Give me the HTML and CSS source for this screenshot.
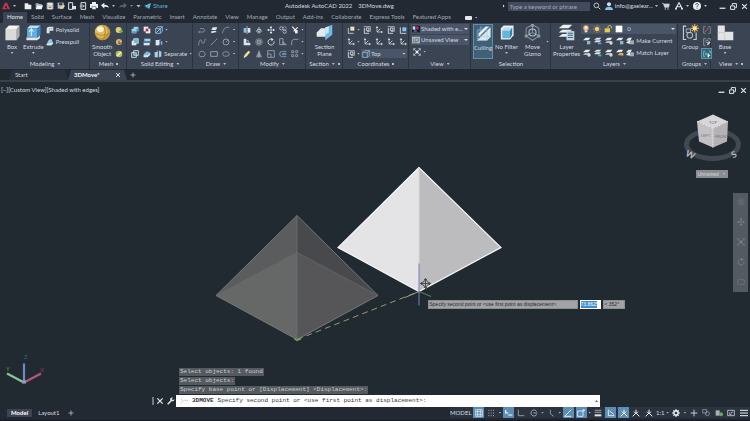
FILE: index.html
```html
<!DOCTYPE html>
<html lang="en">
  <head>
    <meta charset="UTF-8" />
    <meta name="viewport" content="width=device-width, initial-scale=1.0" />
    <title>Autodesk AutoCAD 2022 - 3DMove.dwg</title>
    <link rel="stylesheet" href="styles.css">
  </head>
  <body>
    <!-- icon sprite -->
    <svg class="sprite" aria-hidden="true">
      <symbol id="logo" viewBox="0 0 12 12"><path d="M0 11 4.500 1h3L12 11H8.500L6 5 4 9h3v2z" fill="#c8324a" /></symbol>
      <symbol id="new" viewBox="0 0 12 12"><path d="M1 2h5l1 2h4v7H1z" fill="#e8ecf0" /></symbol>
      <symbol id="open" viewBox="0 0 12 12"><path d="M1 2h4l1 1h4v2H3l-2 5z" fill="#aab4c0" /><path d="M3 5h9l-2 6H1z" fill="#f0f3f5" /></symbol>
      <symbol id="save" viewBox="0 0 12 12"><path d="M1 1h10v10H1z" fill="#b9c0c9" /><path d="M3 1h6v4H3zM3 7h6v4H3z" fill="#e9e3cf" /><path d="M4 8h4v1H4z" fill="#4c5561" /></symbol>
      <symbol id="saveas" viewBox="0 0 12 12"><path d="M1 1h9v9H1z" fill="#b9c0c9" /><path d="M3 1h5v4H3z" fill="#3d4652" /><path d="m5 11 1-3 4-4 2 2-4 4z" fill="#f1d9a0" /></symbol>
      <symbol id="device" viewBox="0 0 12 12"><path d="M1 1h6v10H1z" fill="none" stroke="#dfe4e9" stroke-width="1.500" /><path d="M6 6h6v5H6z" fill="#dfe4e9" /></symbol>
      <symbol id="sheet" viewBox="0 0 12 12"><path d="M3 1h7v10H3z" fill="none" stroke="#dfe4e9" stroke-width="1.500" /><path d="M1 6h7M5 4l3 2-3 2" stroke="#dfe4e9" fill="none" /></symbol>
      <symbol id="print" viewBox="0 0 12 12"><path d="M3 0h6v3H3zM0 3h12v6H0z" fill="#eceff2" /><path d="M3 7h6v4H3z" fill="#fff" stroke="#4c5561" /></symbol>
      <symbol id="undo" viewBox="0 0 12 12"><path d="M0 5l5-4v3c4 0 6 1 7 5-2-2-4-2-7-2v3z" fill="#eceff2" /></symbol>
      <symbol id="redo" viewBox="0 0 12 12"><path d="M12 5 7 1v3C3 4 1 5 0 9c2-2 4-2 7-2v3z" fill="#57606c" /></symbol>
      <symbol id="send" viewBox="0 0 12 12"><path d="M0 6 12 1 9 11 5 8l4-4-5 4v3L3 7z" fill="#63c3e6" /></symbol>
      <symbol id="search" viewBox="0 0 12 12"><circle cx="5" cy="5" r="3.500" fill="none" stroke="#d4d9df" stroke-width="1.300" /><path d="m8 8 3 3" stroke="#d4d9df" stroke-width="1.500" /></symbol>
      <symbol id="user" viewBox="0 0 12 12"><circle cx="6" cy="3.500" r="3" fill="#bfe3f5" /><path d="M0 12c0-4 3-5 6-5s6 1 6 5z" fill="#8ac6e6" /></symbol>
      <symbol id="cart" viewBox="0 0 12 12"><path d="M0 2h2l2 6h6l1-5H3" fill="#cfd5db" stroke="#cfd5db" /><circle cx="5" cy="10.500" r="1" fill="#cfd5db" /><circle cx="9" cy="10.500" r="1" fill="#cfd5db" /></symbol>
      <symbol id="appstore" viewBox="0 0 12 12"><path d="m1 10 5-9 5 9M3 7h6" fill="none" stroke="#e4e8ec" stroke-width="1.600" /><circle cx="1.500" cy="10" r="1.500" fill="#e4e8ec" /><circle cx="10.500" cy="10" r="1.500" fill="#e4e8ec" /></symbol>
      <symbol id="help" viewBox="0 0 12 12"><circle cx="6" cy="6" r="6" fill="#e9edf0" /><path d="M4 4.500c0-3 4-2.500 4-.5C8 5.500 6 5.500 6 7.500M6 8.500V10" fill="none" stroke="#2a323c" stroke-width="1.200" /></symbol>
      <symbol id="min" viewBox="0 0 12 12"><path d="M1 9h10" stroke="#e4e8ec" stroke-width="2.200" /></symbol>
      <symbol id="restore" viewBox="0 0 12 12"><path d="M1 5h7v6H1zM4 4V1h7v7H9" fill="none" stroke="#e4e8ec" stroke-width="1.700" /></symbol>
      <symbol id="close" viewBox="0 0 12 12"><path d="m2 2 8 8m0-8-8 8" stroke="#e4e8ec" stroke-width="1.900" /></symbol>
      <symbol id="plus" viewBox="0 0 12 12"><path d="M6 1v10M1 6h10" stroke="#c4cad1" stroke-width="1.500" /></symbol>

      <symbol id="box" viewBox="0 0 24 24"><path d="m2 7 5-5h15l-4 5z" fill="#f5f5f3" /><path d="M2 7h16v16H2z" fill="#dadbd9" /><path d="m18 7 4-5v15l-4 6z" fill="#aaaeb0" /></symbol>
      <symbol id="extrude" viewBox="0 0 24 24"><path d="M3 6 7 2h15l-4 4z" fill="#b8dff5" /><path d="M3 6h14v13H3z" fill="#62aee0" /><path d="m17 6 5-4v13l-5 4z" fill="#3c82b8" /><path d="M2 19h16l3-3v4l-4 3H2z" fill="#e3e5e6" /><path d="M9 17V8M6 11l3-4 3 4" fill="none" stroke="#d8eefa" stroke-width="1.500" /></symbol>
      <symbol id="polysolid" viewBox="0 0 12 12"><path d="M1 4c1-3 3-3 5-3h5v6H6L5 11H1z" fill="#dfe3e6" /><path d="M5 4h6M5 4v7" stroke="#98a2ac" /></symbol>
      <symbol id="presspull" viewBox="0 0 12 12"><path d="m1 9 3-6 4-2 3 7-3 3H1z" fill="#8fc8ea" /><path d="m1 9 7-1 3 0-3 3H1z" fill="#e4e8ea" /></symbol>
      <symbol id="sphere" viewBox="0 0 24 24"><circle cx="12" cy="12" r="11" fill="#c99a3a" /><circle cx="10.500" cy="10.500" r="9" fill="#e0b95a" /><ellipse cx="9" cy="7.500" rx="5" ry="4" fill="#fbf1cf" /><path d="M2 13c6 4 14 4 20 0M12 1c5 6 5 16 0 22" fill="none" stroke="#9d7426" /></symbol>
      <symbol id="mesh-more" viewBox="0 0 12 12"><circle cx="5.500" cy="6" r="4.500" fill="#e3cd78" /><path d="M9 5v6M6 8h6" stroke="#66b04f" stroke-width="2" /></symbol>
      <symbol id="mesh-less" viewBox="0 0 12 12"><circle cx="6" cy="6" r="4.500" fill="#dfbb6a" /><path d="M6 4v5l4-2" stroke="#7b3b31" fill="none" stroke-width="1.500" /></symbol>
      <symbol id="mesh-refine" viewBox="0 0 12 12"><circle cx="6" cy="6" r="5" fill="#b9bc5c" /><path d="M3 9 9 3" stroke="#fff4c4" stroke-width="2" /></symbol>
      <symbol id="union" viewBox="0 0 12 12"><path d="M4 1h7v7H8v3H1V4h3z" fill="#9fd0ee" /><path d="M1 8h7V4h3v4H8v3H1z" fill="#549dcc" /></symbol>
      <symbol id="subtract" viewBox="0 0 12 12"><path d="M1 4h7v7H1z" fill="#e6eaed" /><path d="M4 1h7v7H4z" fill="#6eb4df" stroke="#e6eaed" /></symbol>
      <symbol id="intersect" viewBox="0 0 12 12"><path d="M1 4h7v7H1zM4 1h7v7H4z" fill="none" stroke="#e6eaed" stroke-width="1.300" /><path d="M4 4h4v4H4z" fill="#62aee0" /></symbol>
      <symbol id="interfere" viewBox="0 0 12 12"><path d="M1 1h7v7H1z" fill="#e6eaed" /><path d="M4 4h7v7H4z" fill="#e6eaed" /><path d="M4 4h4v4H4z" fill="#b23246" /></symbol>
      <symbol id="slice" viewBox="0 0 12 12"><path d="M2 1h9v4H2z" fill="#9fd0ee" /><path d="M1 7h9v4H1z" fill="#dfe4e8" /><path d="M0 6h12" stroke="#3f83b8" stroke-width="1.500" /></symbol>
      <symbol id="thicken" viewBox="0 0 12 12"><path d="m1 6 5-4 5 2-4 5-6 1z" fill="#77bbe4" /><path d="m1 8 6 0 4-4v3l-4 4H1z" fill="#e1e6e9" /></symbol>
      <symbol id="edges" viewBox="0 0 12 12"><path d="M1 4h7v7H1zM4 1h7v7M1 4l3-3M8 4l3-3M8 11l3-3" fill="none" stroke="#8cc6ea" stroke-width="1.300" /><path d="m2 10 6-6" stroke="#f0f3f5" /></symbol>
      <symbol id="faces" viewBox="0 0 12 12"><path d="M1 3h5v8H1z" fill="#e3e7ea" /><path d="m6 3 2-2v8l-2 2zM9 5h2v5H9z" fill="#62aee0" /></symbol>
      <symbol id="separate" viewBox="0 0 12 12"><path d="M1 3h4v8H1zM8 2h3v8H8z" fill="#9fd0ee" /><path d="M5 1v10M8 1v10" stroke="#e6eaed" /></symbol>

      <symbol id="polyline" viewBox="0 0 12 12"><path d="M1 9h6c4 0 4-5 0-5H3" fill="none" stroke="#a9b1ba" /><path d="M1 9h1" stroke="#7db7dc" stroke-width="2" /></symbol>
      <symbol id="spline" viewBox="0 0 12 12"><path d="M1 11C2-2 6 4 6 6s3 5 5-5" fill="none" stroke="#a9b1ba" /></symbol>
      <symbol id="ellipse" viewBox="0 0 12 12"><ellipse cx="6" cy="6" rx="5" ry="3.500" fill="none" stroke="#a9b1ba" /><path d="M6 6h.1" stroke="#7db7dc" stroke-width="2" /></symbol>
      <symbol id="polygon" viewBox="0 0 12 12"><path d="m3 10-2-4 3-4h4l3 4-2 4z" fill="none" stroke="#a9b1ba" /></symbol>
      <symbol id="loft" viewBox="0 0 12 12"><path d="M4 2h7L9 6H2z" fill="#dfe4e8" /><path d="m2 8 6-1 2 2-8 2z" fill="#dfe4e8" /></symbol>
      <symbol id="line" viewBox="0 0 12 12"><path d="M1 11 11 1" stroke="#a9b1ba" /></symbol>
      <symbol id="rect" viewBox="0 0 12 12"><path d="M1 2.500h10v7H1z" fill="none" stroke="#a9b1ba" stroke-width="1.200" /></symbol>
      <symbol id="arc" viewBox="0 0 12 12"><path d="M1 11C1 5 5 1 11 2" fill="none" stroke="#a9b1ba" /></symbol>
      <symbol id="circle" viewBox="0 0 12 12"><circle cx="6" cy="6" r="4.500" fill="none" stroke="#c0c6cd" /><path d="m6 6 3-3" stroke="#7db7dc" /></symbol>

      <symbol id="mirror3d" viewBox="0 0 12 12"><path d="M1 3h4v7H1z" fill="#86c2e8" /><path d="M7 3h4v7H7z" fill="#e1e6e9" /><path d="M6 0v12" stroke="#c5e2f3" /></symbol>
      <symbol id="move3d" viewBox="0 0 12 12"><path d="M2 8 6 2l4 6-4 3zM6 5v4" fill="none" stroke="#d0d5da" /><circle cx="6" cy="7" r="2" fill="none" stroke="#d0d5da" /></symbol>
      <symbol id="move" viewBox="0 0 12 12"><path d="M6 1v10M1 6h10" stroke="#e4e8ec" /><path d="m6 0 2 3H4zM6 12 4 9h4zM0 6l3-2v4zM12 6 9 8V4z" fill="#e4e8ec" /></symbol>
      <symbol id="align3d" viewBox="0 0 12 12"><path d="M1 1h4v6h6v4H1z" fill="#dfe4e8" /><path d="M5 4h3v3" stroke="#77bbe4" fill="none" stroke-width="1.500" /></symbol>
      <symbol id="rotate3d" viewBox="0 0 12 12"><circle cx="6" cy="6" r="5" fill="none" stroke="#98a1ab" /><circle cx="6" cy="6" r="3" fill="#717c88" stroke="#b4bbc3" /></symbol>
      <symbol id="rotate" viewBox="0 0 12 12"><path d="M8 2a4.500 4.500 0 1 0 2.500 3" fill="none" stroke="#dfe4e8" stroke-width="1.300" /><path d="M6 0l4 2-3 3z" fill="#dfe4e8" /></symbol>
      <symbol id="erase" viewBox="0 0 12 12"><path d="m2 8 6-7 3 2-6 7z" fill="#efe28c" /><path d="m2 8 3 2-4 2z" fill="#e8e8e8" /></symbol>
      <symbol id="scale3d" viewBox="0 0 12 12"><path d="m1 11 5-10 5 10z" fill="#7f8a95" /><path d="M6 1v10" stroke="#c6ccd2" /></symbol>
      <symbol id="scale" viewBox="0 0 12 12"><path d="M1 1h10v10H1zM1 6h5v5" fill="none" stroke="#b9c0c8" /></symbol>
      <symbol id="copy" viewBox="0 0 12 12"><circle cx="3.500" cy="3.500" r="2.500" fill="none" stroke="#dfe4e8" /><circle cx="8.500" cy="3.500" r="2.500" fill="none" stroke="#9fb4c4" /><circle cx="8.500" cy="8.500" r="2.500" fill="none" stroke="#dfe4e8" /></symbol>
      <symbol id="stretch" viewBox="0 0 12 12"><path d="M1 1h5v9H1zM6 6l5 4H6z" fill="none" stroke="#b9c0c8" /></symbol>
      <symbol id="offset" viewBox="0 0 12 12"><path d="M11 2H5a4 4 0 0 0 0 8h6M11 5H6a1 1 0 0 0 0 2h5" fill="none" stroke="#79a9c9" stroke-width="1.300" /></symbol>
      <symbol id="trim" viewBox="0 0 12 12"><path d="M2 1 7 7M10 2 4 8" stroke="#eef1f3" stroke-width="1.800" /><path d="M6 6h4v5H6z" fill="#eef1f3" /></symbol>
      <symbol id="fillet" viewBox="0 0 12 12"><path d="M1 11V7c0-4 2-5 5-5h5" fill="none" stroke="#b9c0c8" /></symbol>
      <symbol id="array" viewBox="0 0 12 12"><path d="M1 1h3v3H1zM7 1h3v3H7zM1 7h3v3H1zM7 7h3v3H7z" fill="none" stroke="#a9b7c3" /></symbol>

      <symbol id="section" viewBox="0 0 24 24"><path d="m1 12 6-6h9v12H1z" fill="#e5e9eb" /><path d="m13 5 10-4v14l-10 8z" fill="#71b7df" /><path d="m13 5 5-2v9l-5 3z" fill="#c8e7f6" /></symbol>
      <symbol id="ucs" viewBox="0 0 12 12"><path d="M3 1v8h8M3 9 8 4" fill="none" stroke="#ccd2d8" stroke-width="1.200" /><path d="m3 0 2 3H1zM12 9l-3 2V7z" fill="#ccd2d8" /></symbol>
      <symbol id="ucs-world" viewBox="0 0 12 12"><path d="M2 3v8h8" fill="none" stroke="#ccd2d8" stroke-width="1.300" /><path d="M5 1h6v6H5z" fill="#eee3b0" /></symbol>
      <symbol id="ucs-view" viewBox="0 0 12 12"><path d="M1 1h10v7H6" fill="none" stroke="#dce1e5" /><path d="M5 3h4v4H5zM2 3v8h7" fill="none" stroke="#dce1e5" stroke-width="1.300" /></symbol>
      <symbol id="ucs-face" viewBox="0 0 12 12"><path d="M5 2h6v6H5z" fill="#86c2e8" /><path d="M2 2v9h9" fill="none" stroke="#dce1e5" stroke-width="1.300" /></symbol>
      <symbol id="cube" viewBox="0 0 12 12"><path d="M1 4h7v7H1z" fill="#3e5365" /><path d="M1 4h7v7H1zM4 1h7v7M1 4l3-3M8 4l3-3M8 11l3-3" fill="none" stroke="#a9cde4" /></symbol>
      <symbol id="shaded" viewBox="0 0 12 12"><path d="M0 1h12v10H0z" fill="#171b2d" /><path d="M1 2h4v5H1z" fill="#d8dde2" /><circle cx="8" cy="4.500" r="2.500" fill="#b92947" /><path d="m2 10 3-4 3 4z" fill="#416bc1" /></symbol>
      <symbol id="viewport" viewBox="0 0 12 12"><path d="M0 1h12v10H0z" fill="#aeb5bc" /><path d="M5 4h5v4H5zM2 4v5h5" fill="none" stroke="#5d6670" /></symbol>
      <symbol id="extents" viewBox="0 0 12 12"><path d="M1 1h10v10H1z" fill="none" stroke="#cfd5db" stroke-dasharray="3 4 3 0" /><path d="m1 1 10 10M11 1 1 11" stroke="#cfd5db" /><path d="M4 4h4v4H4z" fill="#e9edf0" /></symbol>
      <symbol id="culling" viewBox="0 0 24 24"><path d="M3 7 8 2h14v15l-5 5H3z" fill="#557b98" /><path d="M3 22 22 3v14l-5 5z" fill="#dce8ee" /><path d="M3 7h14v15H3zM8 2v14h14M3 22l5-6" fill="none" stroke="#8ebedb" stroke-dasharray="2 1" /><path d="M5 12 15 2h5L5 17z" fill="#e8eff3" /></symbol>
      <symbol id="filter" viewBox="0 0 24 24"><path d="m4 6 4-4h14v14l-5 6H4z" fill="#e9edef" /><path d="M6 9h11v11H6z" fill="#63b4de" /><path d="m6 9 3-4h11l-3 4z" fill="#b6ddf1" /><path d="m17 9 3-4v10l-3 5z" fill="#397faa" /></symbol>
      <symbol id="gizmo" viewBox="0 0 24 24"><path d="m12 1 9 5v11l-9 6-9-6V6zM12 1v11M3 17l9-5 9 5" fill="none" stroke="#7f929f" stroke-width="1.500" /><circle cx="12" cy="12" r="5" fill="none" stroke="#b8c3ca" stroke-width="1.500" /><path d="M10 0h4v4h-4zM1 15h4v4H1zM19 15h4v4h-4z" fill="#8d9ca7" /></symbol>
      <symbol id="layers" viewBox="0 0 24 24"><path d="m1 6 6-5h13l-5 5zM1 12l5-4h14l-5 4zM1 18l5-4h14l-5 4z" fill="#eceff0" /><path d="M12 10h11v13H12z" fill="#bdd6e5" /><path d="M14 13h7M14 16h7M14 19h7" stroke="#4d6575" stroke-width="1.500" /></symbol>
      <symbol id="bulb" viewBox="0 0 12 12"><circle cx="6" cy="4.500" r="4" fill="#f2b56b" /><circle cx="6" cy="4" r="2" fill="#fff1c7" /><path d="M4 8h4v3H4z" fill="#dfe3e7" /></symbol>
      <symbol id="sun" viewBox="0 0 12 12"><path d="M6 0v12M0 6h12M2 2l8 8M10 2l-8 8" stroke="#dba33e" /><circle cx="6" cy="6" r="3" fill="#f8d768" /></symbol>
      <symbol id="lock" viewBox="0 0 12 12"><path d="M1 5h8v6H1z" fill="#e8c84b" /><path d="M6 5V3c0-3 5-3 5 0v2" fill="none" stroke="#e8c84b" stroke-width="1.500" /></symbol>
      <symbol id="swatch" viewBox="0 0 12 12"><path d="M1 1h10v10H1z" fill="#fff" /></symbol>
      <symbol id="layer-off" viewBox="0 0 12 12"><path d="m0 5 4-4h7L8 5z" fill="#e8ecee" /><path d="M6 6h5v5H6z" fill="#89b6d1" /></symbol>
      <symbol id="layer-iso" viewBox="0 0 12 12"><path d="m0 4 4-3h7L8 4zM0 8l3-3h8L8 8z" fill="#dee3e6" /><path d="M6 8h5v3H6z" fill="#5aa3cd" /></symbol>
      <symbol id="layer-on" viewBox="0 0 12 12"><path d="m0 5 4-4h7L8 5z" fill="#e8ecee" /><path d="m0 9 3-3h8L8 9z" fill="#aeb7bf" /><circle cx="9" cy="9" r="2.500" fill="#d4dbe0" /></symbol>
      <symbol id="layer-lock" viewBox="0 0 12 12"><path d="m0 5 4-4h7L8 5z" fill="#e8ecee" /><path d="m2 9 4-3h5v4z" fill="#d7ac55" /></symbol>
      <symbol id="layer-match" viewBox="0 0 12 12"><path d="m0 5 4-4h5L6 6zM0 9l3-3h6L6 10z" fill="#e5e9eb" /><path d="M6 5h6v6H6z" fill="#9caab5" /></symbol>
      <symbol id="group" viewBox="0 0 24 24"><path d="M6 3H2v19h4M16 3M20 12v10h-4" fill="none" stroke="#cbd1d7" stroke-width="1.500" /><circle cx="11" cy="16" r="4" fill="none" stroke="#a7b5bf" stroke-width="1.500" /><path d="M6 7h6v5H6z" fill="none" stroke="#cbd1d7" /><path d="M18 0v12M12 6h12M14 2l8 8M22 2l-8 8" stroke="#efbd4b" stroke-width="1.500" /><circle cx="18" cy="6" r="3" fill="#ffe591" /></symbol>
      <symbol id="ungroup" viewBox="0 0 12 12"><path d="M4 1H1v10h3M8 1h3v10H8" fill="none" stroke="#8faabd" /><path d="m3 9 6-7" stroke="#d94c63" stroke-width="1.500" /></symbol>
      <symbol id="group-edit" viewBox="0 0 12 12"><path d="M4 1H1v10h3M7 1h4v3" fill="none" stroke="#adb6be" /><circle cx="6" cy="5" r="2" fill="none" stroke="#adb6be" /><path d="m6 11 1-3 3-3 1 2-3 3z" fill="#dbe0e4" /></symbol>
      <symbol id="group-select" viewBox="0 0 12 12"><path d="M3 2H1v8h2M9 2h2v3" fill="none" stroke="#9cd6e4" /><path d="M3 4h3v4H3z" fill="#58a7b9" /><path d="m7 4 4 5H9v2H7z" fill="#fff" /></symbol>
      <symbol id="base" viewBox="0 0 24 24"><path d="M1 2h10v9h12v12H1z" fill="#e2e3e4" /><path d="M1 12h10v11" fill="none" stroke="#c3c6c9" /></symbol>

      <symbol id="grid" viewBox="0 0 12 12"><path d="M1 1h10v10H1zM4 1v10M8 1v10M1 4h10M1 8h10" fill="none" stroke="#e8f3fb" /></symbol>
      <symbol id="snap" viewBox="0 0 12 12"><path d="M2 2h9M2 6h9M2 10h9" stroke="#a7afb8" stroke-width="1.500" stroke-dasharray="1.500 2" /></symbol>
      <symbol id="dynamic" viewBox="0 0 12 12"><path d="M1 2v4h4M5 9h6" fill="none" stroke="#fff" stroke-width="1.800" /></symbol>
      <symbol id="ortho" viewBox="0 0 12 12"><path d="M2 1v9h9" fill="none" stroke="#a7afb8" stroke-width="1.200" /></symbol>
      <symbol id="polar" viewBox="0 0 12 12"><path d="M10 8a4.500 4.500 0 1 1 0-4M5 6h6" fill="none" stroke="#b9c0c8" stroke-width="1.200" /></symbol>
      <symbol id="isodraft" viewBox="0 0 12 12"><path d="M5 1v6l5 4" fill="none" stroke="#a7afb8" stroke-width="1.200" /></symbol>
      <symbol id="track" viewBox="0 0 12 12"><path d="M1 11 11 1M1 11h10" fill="none" stroke="#f0f8fc" stroke-width="1.300" /></symbol>
      <symbol id="osnap" viewBox="0 0 12 12"><path d="M1 3h8v8H1zM9 3V1h2v2z" fill="none" stroke="#f0f8fc" stroke-width="1.200" /></symbol>
      <symbol id="weight" viewBox="0 0 12 12"><path d="M1 2h10M1 5h10" stroke="#d0d6dc" /><path d="M1 9.500h10" stroke="#e1e5e9" stroke-width="3" /></symbol>
      <symbol id="osnap3d" viewBox="0 0 12 12"><path d="M2 1v9h9M4 3l6 5" fill="none" stroke="#f0f8fc" stroke-width="1.300" /></symbol>
      <symbol id="scale-person" viewBox="0 0 12 12"><path d="M6 1v5l-5 5M6 6l5 5M3 4l3 3 3-3" fill="none" stroke="#f0f3f5" stroke-width="1.500" /></symbol>
      <symbol id="gear" viewBox="0 0 12 12"><circle cx="6" cy="6" r="3.200" fill="none" stroke="#eef1f3" stroke-width="2.300" /><path d="M6 0v12M0 6h12M2 2l8 8M10 2l-8 8" stroke="#eef1f3" stroke-width="1.600" stroke-dasharray="2 8" /></symbol>
      <symbol id="isolate" viewBox="0 0 12 12"><path d="M1 1h6v5H1z" fill="none" stroke="#a8b0b9" /><circle cx="8" cy="7" r="3" fill="none" stroke="#a8b0b9" /></symbol>
      <symbol id="hardware" viewBox="0 0 12 12"><path d="M1 2h6v8H1z" fill="#a9b2ba" /><circle cx="9" cy="8" r="3" fill="#68a85f" /></symbol>
      <symbol id="clean" viewBox="0 0 12 12"><path d="M1 2h10v8H1zM6 6l3-2M4 5v3h3" fill="none" stroke="#d0d5da" stroke-width="1.200" /></symbol>
      <symbol id="menu" viewBox="0 0 12 12"><path d="M0 2h12M0 6h12M0 10h12" stroke="#eceff2" stroke-width="1.500" /></symbol>
      <symbol id="wrench" viewBox="0 0 12 12"><path d="m1 11 6-6" stroke="#e4e8ec" stroke-width="2.200" /><path d="M11 3 9 5 7 3l2-2c-3-1-5 1-4 4 2 3 7 1 6-2z" fill="#e4e8ec" /></symbol>
      <symbol id="prompt" viewBox="0 0 12 12"><path d="m1 2 4 4M1 10l4-4M7 5h5" fill="none" stroke="#8b929a" stroke-dasharray="2 1" /></symbol>
    </svg>

    <header class="titlebar">
      <div class="quick-access">
        <button class="tool app" aria-label="Application menu"><svg><use href="#logo" /></svg></button><i class="caret"></i>
        <button class="tool first" aria-label="New"><svg><use href="#new" /></svg></button>
        <button class="tool" aria-label="Open"><svg><use href="#open" /></svg></button>
        <button class="tool" aria-label="Save"><svg><use href="#save" /></svg></button>
        <button class="tool" aria-label="Save as"><svg><use href="#saveas" /></svg></button>
        <button class="tool" aria-label="Open from web"><svg><use href="#device" /></svg></button>
        <button class="tool" aria-label="Save to web"><svg><use href="#sheet" /></svg></button>
        <button class="tool" aria-label="Plot"><svg><use href="#print" /></svg></button>
        <button class="tool" aria-label="Undo"><svg><use href="#undo" /></svg></button><i class="caret"></i>
        <button class="tool" aria-label="Redo"><svg><use href="#redo" /></svg></button><i class="caret dim"></i>
        <i class="caret wide"></i>
        <button class="share"><svg><use href="#send" /></svg>Share</button>
      </div>
      <div class="window-title"><span>Autodesk AutoCAD 2022</span><span>3DMove.dwg</span></div>
      <div class="title-tools">
        <i class="play"></i>
        <input class="search" type="text" placeholder="Type a keyword or phrase" aria-label="Search">
        <button class="tool" aria-label="Search"><svg><use href="#search" /></svg></button>
        <button class="account"><svg><use href="#user" /></svg>info@gaelear...</button><i class="caret"></i>
        <button class="tool" aria-label="Store"><svg><use href="#cart" /></svg></button>
        <button class="tool" aria-label="Apps"><svg><use href="#appstore" /></svg></button><i class="caret"></i>
        <button class="tool" aria-label="Help"><svg><use href="#help" /></svg></button><i class="caret"></i>
        <div class="window-buttons">
          <button aria-label="Minimize"><svg><use href="#min" /></svg></button>
          <button aria-label="Restore"><svg><use href="#restore" /></svg></button>
          <button aria-label="Close"><svg><use href="#close" /></svg></button>
        </div>
      </div>
    </header>

    <nav class="menu">
      <a href="#" class="active">Home</a>
      <a href="#">Solid</a>
      <a href="#">Surface</a>
      <a href="#">Mesh</a>
      <a href="#">Visualize</a>
      <a href="#">Parametric</a>
      <a href="#">Insert</a>
      <a href="#">Annotate</a>
      <a href="#">View</a>
      <a href="#">Manage</a>
      <a href="#">Output</a>
      <a href="#">Add-ins</a>
      <a href="#">Collaborate</a>
      <a href="#">Express Tools</a>
      <a href="#">Featured Apps</a>
      <button class="ribbon-toggle" aria-label="Minimize ribbon"><i></i></button><i class="caret"></i>
    </nav>

    <section class="ribbon">
      <div class="panel">
        <div class="panel-body">
          <button class="big"><svg><use href="#box" /></svg>Box<i class="caret"></i></button>
          <button class="big"><svg><use href="#extrude" /></svg>Extrude<i class="caret"></i></button>
          <div class="rows">
            <button class="labelled"><svg><use href="#polysolid" /></svg>Polysolid</button>
            <button class="labelled"><svg><use href="#presspull" /></svg>Presspull</button>
          </div>
        </div>
        <h2>Modeling<i class="caret"></i></h2>
      </div>

      <div class="panel">
        <div class="panel-body">
          <button class="big"><svg><use href="#sphere" /></svg>Smooth<br>Object</button>
          <div class="rows">
            <button class="tool" aria-label="Smooth more"><svg><use href="#mesh-more" /></svg></button>
            <button class="tool" aria-label="Smooth less"><svg><use href="#mesh-less" /></svg></button>
            <button class="tool" aria-label="Refine mesh"><svg><use href="#mesh-refine" /></svg></button>
          </div>
        </div>
        <h2>Mesh<i class="launcher"></i></h2>
      </div>

      <div class="panel">
        <div class="panel-body">
          <div class="rows">
            <div class="row">
              <button class="tool" aria-label="Union"><svg><use href="#union" /></svg></button>
              <button class="tool" aria-label="Interfere"><svg><use href="#interfere" /></svg></button>
              <button class="tool" aria-label="Extract edges"><svg><use href="#edges" /></svg></button><i class="caret"></i>
            </div>
            <div class="row">
              <button class="tool" aria-label="Subtract"><svg><use href="#subtract" /></svg></button>
              <button class="tool" aria-label="Slice"><svg><use href="#slice" /></svg></button>
              <button class="tool" aria-label="Extrude faces"><svg><use href="#faces" /></svg></button><i class="caret"></i>
            </div>
            <div class="row">
              <button class="tool" aria-label="Intersect"><svg><use href="#intersect" /></svg></button>
              <button class="tool" aria-label="Thicken"><svg><use href="#thicken" /></svg></button>
              <button class="labelled"><svg><use href="#separate" /></svg>Separate<i class="caret"></i></button>
            </div>
          </div>
        </div>
        <h2>Solid Editing<i class="caret"></i></h2>
      </div>

      <div class="panel">
        <div class="panel-body spread">
          <div class="rows">
            <div class="row">
              <button class="tool" aria-label="Polyline"><svg><use href="#polyline" /></svg></button>
              <button class="tool" aria-label="Loft"><svg><use href="#loft" /></svg></button>
              <button class="tool" aria-label="Arc"><svg><use href="#arc" /></svg></button><i class="caret"></i>
            </div>
            <div class="row">
              <button class="tool" aria-label="Spline"><svg><use href="#spline" /></svg></button>
              <button class="tool" aria-label="Line"><svg><use href="#line" /></svg></button>
              <button class="tool" aria-label="Circle"><svg><use href="#circle" /></svg></button><i class="caret"></i>
            </div>
            <div class="row">
              <button class="tool" aria-label="Polygon"><svg><use href="#polygon" /></svg></button>
              <button class="tool" aria-label="Rectangle"><svg><use href="#rect" /></svg></button>
              <button class="tool" aria-label="Ellipse"><svg><use href="#ellipse" /></svg></button><i class="caret"></i>
            </div>
          </div>
        </div>
        <h2>Draw<i class="caret"></i></h2>
      </div>

      <div class="panel">
        <div class="panel-body spread">
          <div class="rows">
            <div class="row">
              <button class="tool" aria-label="3D mirror"><svg><use href="#mirror3d" /></svg></button>
              <button class="tool" aria-label="3D move"><svg><use href="#move3d" /></svg></button>
              <button class="tool" aria-label="Move"><svg><use href="#move" /></svg></button>
              <button class="tool" aria-label="Copy"><svg><use href="#copy" /></svg></button>
              <button class="tool" aria-label="Trim"><svg><use href="#trim" /></svg></button><i class="caret"></i>
            </div>
            <div class="row">
              <button class="tool" aria-label="3D align"><svg><use href="#align3d" /></svg></button>
              <button class="tool" aria-label="3D rotate"><svg><use href="#rotate3d" /></svg></button>
              <button class="tool" aria-label="Rotate"><svg><use href="#rotate" /></svg></button>
              <button class="tool" aria-label="Stretch"><svg><use href="#stretch" /></svg></button>
              <button class="tool" aria-label="Fillet"><svg><use href="#fillet" /></svg></button><i class="caret"></i>
            </div>
            <div class="row">
              <button class="tool" aria-label="Erase"><svg><use href="#erase" /></svg></button>
              <button class="tool" aria-label="3D scale"><svg><use href="#scale3d" /></svg></button>
              <button class="tool" aria-label="Scale"><svg><use href="#scale" /></svg></button>
              <button class="tool" aria-label="Offset"><svg><use href="#offset" /></svg></button>
              <button class="tool" aria-label="Array"><svg><use href="#array" /></svg></button><i class="caret"></i>
            </div>
          </div>
        </div>
        <h2>Modify<i class="caret"></i></h2>
      </div>

      <div class="panel">
        <div class="panel-body center">
          <button class="big"><svg><use href="#section" /></svg>Section<br>Plane</button>
        </div>
        <h2>Section<i class="caret"></i><i class="launcher"></i></h2>
      </div>

      <div class="panel">
        <div class="panel-body">
          <div class="rows fill">
            <div class="row">
              <button class="tool" aria-label="UCS world"><svg><use href="#ucs-world" /></svg></button><i class="caret"></i>
              <button class="tool" aria-label="UCS view"><svg><use href="#ucs-view" /></svg></button>
              <button class="tool" aria-label="UCS origin"><svg><use href="#ucs" /></svg></button>
              <button class="tool" aria-label="UCS object"><svg><use href="#ucs-view" /></svg></button>
              <button class="tool" aria-label="UCS face"><svg><use href="#ucs-face" /></svg></button>
            </div>
            <div class="row">
              <button class="tool" aria-label="UCS X"><svg><use href="#ucs" /></svg></button><i class="caret"></i>
              <button class="tool" aria-label="UCS"><svg><use href="#ucs" /></svg></button>
              <button class="tool" aria-label="UCS Z axis"><svg><use href="#ucs" /></svg></button>
              <button class="tool" aria-label="UCS 3-point"><svg><use href="#ucs" /></svg></button>
              <button class="tool" aria-label="UCS previous"><svg><use href="#ucs" /></svg></button>
            </div>
            <div class="row">
              <button class="tool" aria-label="UCS icon"><svg><use href="#ucs-view" /></svg></button><i class="caret"></i>
              <label class="combo"><svg><use href="#cube" /></svg><select aria-label="UCS name"><option>Top</option></select></label>
            </div>
          </div>
        </div>
        <h2>Coordinates<i class="launcher"></i></h2>
      </div>

      <div class="panel">
        <div class="panel-body">
          <div class="rows fill">
            <label class="combo"><svg><use href="#shaded" /></svg><select aria-label="Visual style"><option>Shaded with e...</option></select></label>
            <label class="combo"><svg><use href="#viewport" /></svg><select aria-label="Named view"><option>Unsaved View</option></select></label>
            <div class="row"><button class="tool" aria-label="Zoom extents"><svg><use href="#extents" /></svg></button><i class="caret"></i></div>
          </div>
        </div>
        <h2>View<i class="caret"></i></h2>
      </div>

      <div class="panel">
        <div class="panel-body">
          <button class="big pressed"><svg><use href="#culling" /></svg>Culling</button>
          <button class="big grow"><svg><use href="#filter" /></svg>No Filter<i class="caret"></i></button>
          <button class="big grow"><svg><use href="#gizmo" /></svg>Move<br>Gizmo</button><i class="caret side"></i>
        </div>
        <h2>Selection</h2>
      </div>

      <div class="panel layer-panel">
        <div class="panel-body">
          <button class="big"><svg><use href="#layers" /></svg>Layer<br>Properties</button>
          <div class="rows fill">
            <label class="combo layer-combo">
              <svg><use href="#bulb" /></svg><svg><use href="#sun" /></svg><svg><use href="#lock" /></svg><svg><use href="#swatch" /></svg>
              <select aria-label="Layer"><option>0</option></select>
            </label>
            <div class="row">
              <button class="tool" aria-label="Layer off"><svg><use href="#layer-off" /></svg></button>
              <button class="tool" aria-label="Isolate layer"><svg><use href="#layer-iso" /></svg></button>
              <button class="tool" aria-label="Freeze layer"><svg><use href="#layer-on" /></svg></button>
              <button class="tool" aria-label="Lock layer"><svg><use href="#layer-off" /></svg></button>
              <button class="labelled"><svg><use href="#layer-match" /></svg>Make Current</button>
            </div>
            <div class="row">
              <button class="tool" aria-label="Layers on"><svg><use href="#layer-on" /></svg></button>
              <button class="tool" aria-label="Unisolate layer"><svg><use href="#layer-iso" /></svg></button>
              <button class="tool" aria-label="Thaw layers"><svg><use href="#layer-on" /></svg></button>
              <button class="tool" aria-label="Unlock layer"><svg><use href="#layer-lock" /></svg></button>
              <button class="labelled"><svg><use href="#layer-match" /></svg>Match Layer</button>
            </div>
          </div>
        </div>
        <h2>Layers<i class="caret"></i></h2>
      </div>

      <div class="panel">
        <div class="panel-body">
          <button class="big"><svg><use href="#group" /></svg>Group</button>
          <div class="rows">
            <button class="tool" aria-label="Ungroup"><svg><use href="#ungroup" /></svg></button>
            <button class="tool" aria-label="Edit group"><svg><use href="#group-edit" /></svg></button>
            <button class="tool pressed" aria-label="Group selection"><svg><use href="#group-select" /></svg></button>
          </div>
        </div>
        <h2>Groups<i class="caret"></i></h2>
      </div>

      <div class="panel last">
        <div class="panel-body">
          <button class="big base"><svg><use href="#base" /></svg>Base<i class="caret"></i></button>
        </div>
        <h2>View<i class="caret"></i><i class="launcher"></i></h2>
      </div>
    </section>

    <nav class="doc-tabs">
      <a href="#">Start</a>
      <a href="#" class="active">3DMove*<svg><use href="#close" /></svg></a>
      <button class="tool" aria-label="New drawing"><svg><use href="#plus" /></svg></button>
    </nav>

    <main class="viewport">
      <svg class="scene" viewBox="0 83 750 324">
        <!-- original solid -->
        <path d="M297 216 216 296 297 253z" fill="#5b5c5d" />
        <path d="M297 216 378 296 297 253z" fill="#48494c" />
        <path d="M216 296 297 253V340z" fill="#666767" />
        <path d="M378 296 297 253V340z" fill="#565658" />
        <path d="M216 296 297 253 378 296M297 216v124" fill="none" stroke="#707173" stroke-width="0.700" />
        <path d="M297 216 216 296 297 340 378 296z" fill="none" stroke="#74777b" />
        <path d="m297 340 122-48" stroke="#9a9577" stroke-dasharray="6 4" />
        <path d="M294 339l3 2 4-2" fill="none" stroke="#76a04c" stroke-width="1.500" />

        <!-- moved solid -->
        <path d="M419 168 338 248 419 292z" fill="#e4e4e6" />
        <path d="M419 168 501 248 419 292z" fill="#bcbcbf" />
        <path d="M419 168 338 248 419 292 501 248z" fill="none" stroke="#f8f8fa" stroke-width="1.200" />
        <path d="M419 168v96" stroke="#d8d8db" />
        <path d="M419 264v42" stroke="#7682bd" />
        <path d="m419 292 12 5" stroke="#5c8a5e" />
        <path d="m419 292-14 6" stroke="#a0988c" />
        <g fill="none" stroke="#33363b" stroke-width="0.800">
          <circle cx="425.500" cy="284" r="3" />
          <path d="M425.500 279v10M420.500 284h10M424 280.500l1.500-1.500 1.500 1.500M424 287.500l1.500 1.500 1.500-1.500M422 282.500l-1.500 1.500 1.500 1.500M429 282.500l1.500 1.500-1.500 1.500" />
        </g>

        <!-- view cube -->
        <ellipse cx="712.500" cy="145" rx="26" ry="14" fill="none" stroke="#434950" stroke-width="5" />
        <path d="m713 115 15 7-15 7-16-7z" fill="#d9d6d8" />
        <path d="m697 122 16 7v19l-14-6z" fill="#c4c1c4" />
        <path d="m728 122-15 7v19l14-6z" fill="#b5b1b5" />
        <path d="m697 122 16 7 15-7M713 129v19" fill="none" stroke="#ebe8ea" stroke-dasharray="2 1" />
        <g class="cube-text">
          <text x="709" y="124">TOP</text>
          <text x="701" y="137">LEFT</text>
          <text x="715" y="138">FRONT</text>
        </g>
        <g class="compass"><text transform="rotate(25 690 154)" x="686" y="158">W</text><text transform="rotate(-25 734 154)" x="731" y="158">S</text></g>

        <!-- UCS icon -->
        <g stroke-width="2.200">
          <path d="M24 383V364" stroke="#6d8ebd" />
          <path d="M24 383 7 374" stroke="#85c895" />
          <path d="m24 383 17-9" stroke="#b5587c" />
        </g>
        <path d="M22 381h4v3h-4z" fill="#909fb2" />
        <g class="axis"><text x="6" y="371" fill="#4c9a41">Y</text><text x="40" y="372" fill="#9c3548">X</text><text x="24" y="359" fill="#375f9b">Z</text></g>
      </svg>

      <div class="view-head">
        <span>[−][Custom View][Shaded with edges]</span>
        <div class="window-buttons">
          <button aria-label="Minimize drawing"><svg><use href="#min" /></svg></button>
          <button aria-label="Restore drawing"><svg><use href="#restore" /></svg></button>
          <button aria-label="Close drawing"><svg><use href="#close" /></svg></button>
        </div>
      </div>

      <button class="ucs-name">Unnamed<i class="caret"></i></button>
      <div class="nav-bar">
        <button aria-label="Wheel"><svg><use href="#rotate3d" /></svg></button>
        <button aria-label="Pan"><svg><use href="#move" /></svg></button>
        <button aria-label="Zoom"><svg><use href="#extents" /></svg></button>
        <button aria-label="Orbit"><svg><use href="#rotate" /></svg></button>
        <button aria-label="Motion"><svg><use href="#rect" /></svg></button>
      </div>

      <div class="dynamic-input">
        <span class="hint">Specify second point or &lt;use first point as displacement&gt;:</span>
        <span class="distance"><input type="text" value="73.8625" aria-label="Distance"></span>
        <span class="angle">&lt; 352°</span>
      </div>

      <div class="command">
        <div class="history">
          <p>Select objects: 1 found</p>
          <p>Select objects:</p>
          <p>Specify base point or [Displacement] &lt;Displacement&gt;:</p>
        </div>
        <div class="command-line">
          <i class="grip"></i>
          <button class="tool" aria-label="Close command line"><svg><use href="#close" /></svg></button>
          <button class="tool" aria-label="Customize"><svg><use href="#wrench" /></svg></button>
          <div class="prompt"><svg><use href="#prompt" /></svg><b>3DMOVE</b><span>Specify second point or &lt;use first point as displacement&gt;:</span><i class="caret up"></i></div>
        </div>
      </div>
    </main>

    <footer class="statusbar">
      <nav class="layouts">
        <a href="#" class="active">Model</a>
        <a href="#">Layout1</a>
        <button class="tool" aria-label="New layout"><svg><use href="#plus" /></svg></button>
      </nav>
      <div class="status-tools">
        <button>MODEL</button>
        <button class="tool on" aria-label="Grid"><svg><use href="#grid" /></svg></button>
        <button class="tool" aria-label="Snap"><svg><use href="#snap" /></svg></button><i class="caret"></i>
        <button class="tool on" aria-label="Dynamic input"><svg><use href="#dynamic" /></svg></button>
        <button class="tool" aria-label="Ortho"><svg><use href="#ortho" /></svg></button>
        <button class="tool" aria-label="Polar tracking"><svg><use href="#polar" /></svg></button><i class="caret"></i>
        <button class="tool" aria-label="Isometric drafting"><svg><use href="#isodraft" /></svg></button><i class="caret"></i>
        <button class="tool on" aria-label="Object snap tracking"><svg><use href="#track" /></svg></button>
        <button class="tool on" aria-label="Object snap"><svg><use href="#osnap" /></svg></button><i class="caret"></i>
        <button class="tool" aria-label="Lineweight"><svg><use href="#weight" /></svg></button>
        <button class="tool on" aria-label="Dynamic UCS"><svg><use href="#osnap3d" /></svg></button>
        <button class="tool on" aria-label="Annotation visibility"><svg><use href="#scale-person" /></svg></button>
        <button class="tool" aria-label="Auto scale"><svg><use href="#scale-person" /></svg></button>
        <button class="tool" aria-label="Annotation scale"><svg><use href="#scale-person" /></svg></button>
        <button>1:1</button><i class="caret"></i>
        <button class="tool" aria-label="Workspace"><svg><use href="#gear" /></svg></button><i class="caret"></i>
        <button class="tool" aria-label="Annotation monitor"><svg><use href="#plus" /></svg></button>
        <button class="tool" aria-label="Isolate objects"><svg><use href="#isolate" /></svg></button>
        <button class="tool" aria-label="Hardware acceleration"><svg><use href="#hardware" /></svg></button>
        <button class="tool" aria-label="Clean screen"><svg><use href="#clean" /></svg></button>
        <button class="tool" aria-label="Customization"><svg><use href="#menu" /></svg></button>
      </div>
    </footer>
  </body>
</html>
```

FILE: styles.css
```css
* {
  margin: 0;
  padding: 0;
  box-sizing: border-box;
}

body {
  display: flex;
  flex-direction: column;
  min-height: 100vh;
  background-color: #222933;
  color: #d5dae0;
  font-family: "Lato", sans-serif;
  font-size: 6px;
  line-height: 8px;
  white-space: nowrap;
}

button,
input,
select {
  background: none;
  border: none;
  color: inherit;
  font: inherit;
}

a {
  color: inherit;
  text-decoration: none;
}

svg {
  display: block;
  flex: none;
  width: 8px;
  height: 8px;
}

.sprite {
  position: absolute;
  width: 0;
  height: 0;
}

.tool {
  display: flex;
  align-items: center;
  justify-content: center;
  flex: none;
  width: 11px;
  height: 11px;
}

.caret {
  flex: none;
  width: 3px;
  height: 2px;
  background: #b5bcc5;
  clip-path: polygon(0 0, 100% 0, 50% 100%);
}

.caret.dim {
  opacity: 0.6;
}

.caret.wide {
  width: 5px;
  height: 3px;
}

.launcher {
  width: 2px;
  height: 2px;
  background: #b5bcc5;
}

/* title bar */
.titlebar {
  display: grid;
  grid-template-columns: 38fr 29fr 33fr;
  align-items: center;
  height: 12px;
}

.quick-access,
.title-tools,
.window-title,
.window-buttons {
  display: flex;
  align-items: center;
}

.quick-access .caret {
  margin: 0 2px;
}

.quick-access .first {
  margin-left: 4px;
}

.quick-access .wide {
  margin: 0 1px;
}

.share,
.account {
  display: flex;
  align-items: center;
  gap: 2px;
}

.share {
  margin-left: 2px;
  color: #63b8da;
}

.share svg {
  width: 7px;
}

.window-title {
  gap: 6px;
}

.title-tools {
  gap: 2px;
}

.play {
  width: 2px;
  height: 4px;
  margin-right: 1px;
  background: #e4e8ec;
  clip-path: polygon(0 0, 100% 50%, 0 100%);
}

.search {
  flex: 1;
  min-width: 0;
  height: 9px;
  padding: 0 2px;
  background: #424b5c;
}

.search::placeholder {
  color: #a4acb8;
}

.window-buttons {
  gap: 4px;
  margin: 0 2px 0 auto;
}

.title-tools .window-buttons {
  padding-left: 10px;
}

.window-buttons svg {
  width: 7px;
  height: 7px;
}

/* ribbon tabs */
.menu {
  display: flex;
  align-items: center;
  height: 11px;
  padding-left: 3px;
  color: #a4acb5;
}

.menu a {
  padding: 1px 4px 2px;
}

.menu .active {
  background: #3b4453;
  color: #e4e8ec;
}

.ribbon-toggle {
  margin: 0 3px 0 10px;
}

.ribbon-toggle i {
  display: block;
  width: 7px;
  height: 4px;
  background: #e4e8ec;
  border-radius: 1px;
}

/* ribbon */
.ribbon {
  display: grid;
  grid-template-columns: 90fr 37fr 66fr 46fr 67fr 37fr 66fr 62fr 80fr 127fr 33fr 39fr;
  background: #3b4453;
}

.panel {
  display: flex;
  flex-direction: column;
  min-width: 0;
  padding: 1px 1px 0 2px;
  border-right: 1px solid #2b333f;
}

.panel.last {
  border-right: none;
}

.panel-body {
  display: flex;
  height: 35px;
  gap: 1px;
}

.panel-body.center {
  justify-content: center;
}

.panel-body.spread {
  justify-content: space-around;
}

.panel h2 {
  display: flex;
  align-items: center;
  justify-content: center;
  gap: 3px;
  height: 10px;
  font-size: 6px;
  font-weight: 400;
}

.big {
  display: flex;
  flex-direction: column;
  align-items: center;
  flex: none;
  min-width: 20px;
  line-height: 7px;
}

.big svg {
  width: 17px;
  height: 17px;
  margin-bottom: 2px;
}

.big .caret {
  margin-top: 2px;
}

.big.grow {
  flex: 1;
}

.big.base {
  min-width: 24px;
}

.big.pressed {
  border: 1px solid #5f94a8;
  background: #3f6076;
}

.caret.side {
  align-self: center;
}

.rows {
  display: flex;
  flex-direction: column;
  gap: 1px;
}

.rows.fill {
  flex: 1;
  min-width: 0;
}

.row {
  display: flex;
  align-items: center;
  gap: 1px;
  height: 11px;
}

.layer-panel .row {
  gap: 0;
}

.rows .tool.pressed {
  background: #326a78;
  outline: 1px solid #5f94a8;
  outline-offset: -1px;
}

.labelled {
  display: flex;
  align-items: center;
  gap: 2px;
  height: 11px;
  padding-left: 1px;
}

.combo {
  display: flex;
  align-items: center;
  flex: 1;
  max-height: 10px;
  min-width: 0;
  padding: 0 1px;
  background: #4a5569;
}

.combo::after {
  content: "";
  flex: none;
  width: 4px;
  height: 2px;
  background: #d5dae0;
  clip-path: polygon(0 0, 100% 0, 50% 100%);
}

.combo select {
  flex: 1;
  min-width: 0;
  height: 9px;
  padding-left: 1px;
  appearance: none;
}

.layer-combo {
  gap: 3px;
}

/* drawing tabs */
.doc-tabs {
  display: flex;
  align-items: flex-end;
  height: 13px;
  padding-left: 9px;
  border-bottom: 2px solid #3a414b;
}

.doc-tabs a {
  display: flex;
  align-items: center;
  justify-content: space-between;
  width: 59px;
  height: 10px;
  padding: 0 6px;
  background: #2a323d;
  clip-path: polygon(3px 0, 56px 0, 100% 100%, 0 100%);
}

.doc-tabs .active {
  background: #3b4453;
  color: #f0f3f5;
  font-weight: 700;
}

.doc-tabs svg {
  width: 6px;
  height: 6px;
}

/* viewport */
.viewport {
  position: relative;
  display: flex;
  flex: 1;
  flex-direction: column;
  background: #212931;
}

.scene {
  position: absolute;
  inset: 0;
  width: 100%;
  height: 100%;
}

.cube-text {
  fill: #77747a;
  font-size: 4px;
}

.compass {
  fill: #b7bbc0;
  font-size: 9px;
  font-weight: 700;
}

.axis {
  font-size: 6px;
}

.view-head {
  position: relative;
  display: flex;
  align-items: center;
  padding: 4px 1px;
}

.ucs-name {
  position: absolute;
  top: 27%;
  right: 3%;
  display: flex;
  align-items: center;
  justify-content: space-between;
  width: 32px;
  height: 8px;
  padding: 0 2px;
  background: #898c92;
  color: #d6d8db;
  font-size: 5px;
}

.nav-bar {
  position: absolute;
  top: 34%;
  right: 2px;
  display: flex;
  flex-direction: column;
  align-items: center;
  justify-content: space-around;
  width: 15px;
  height: 99px;
  background: #596068;
  opacity: 0.9;
}

.nav-bar svg {
  opacity: 0.3;
}

.dynamic-input {
  position: absolute;
  top: 67%;
  left: 57%;
  display: flex;
  gap: 2px;
  color: #25282c;
  font-family: "Liberation Sans", sans-serif;
  font-size: 5px;
}

.hint,
.angle {
  height: 9px;
  padding: 0 1px;
  background: #a2a3a7;
  border: 1px solid #8b8d92;
  line-height: 7px;
}

.hint {
  width: 150px;
}

.angle {
  width: 22px;
}

.distance {
  display: flex;
  width: 21px;
  height: 9px;
  padding: 1px;
  background: #ffffff;
}

.distance input {
  width: 16px;
  background: #3b8fd2;
  color: #ffffff;
}

/* command line */
.command {
  position: relative;
  width: 60%;
  margin-top: auto;
  margin-left: 20%;
  font-family: "Liberation Mono", monospace;
}

.history {
  display: flex;
  flex-direction: column;
  align-items: flex-start;
  gap: 1px;
  padding: 0 0 1px 29px;
}

.history p {
  padding: 0 1px;
  background: #555a61;
  color: #c8ccd1;
}

.command-line {
  display: flex;
  align-items: center;
  padding-left: 2px;
}

.grip {
  width: 2px;
  height: 8px;
  background: #717983;
}

.prompt {
  display: flex;
  align-items: center;
  flex: 1;
  gap: 4px;
  height: 12px;
  padding: 0 2px 0 4px;
  background: #ffffff;
  color: #30343a;
}

.prompt .up {
  margin-left: auto;
  background: #5f656c;
  transform: rotate(180deg);
}

/* status bar */
.statusbar {
  display: flex;
  justify-content: space-between;
  height: 14px;
  padding-bottom: 2px;
  border-bottom: 1px solid #16181e;
}

.layouts {
  display: flex;
  align-items: center;
  padding-left: 7px;
}

.layouts a {
  padding: 0 4px;
  margin-right: 2px;
}

.layouts .active {
  background: #3b4453;
  color: #ffffff;
  font-weight: 700;
}

.layouts svg {
  width: 6px;
  height: 6px;
}

.status-tools {
  display: flex;
  align-items: center;
  justify-content: space-between;
  width: 40%;
  background: #2b333f;
}

.status-tools .on {
  background: #5d8db4;
}
```
